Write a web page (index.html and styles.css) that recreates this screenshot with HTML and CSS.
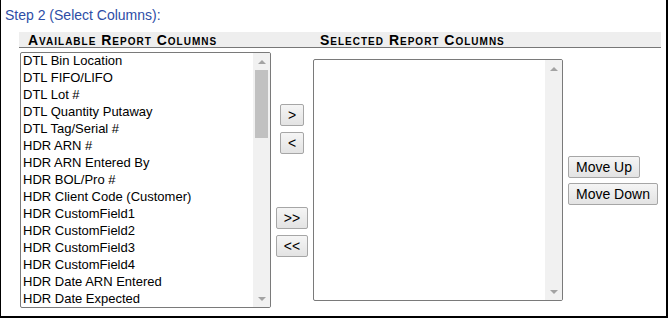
FILE: index.html
```html
<!DOCTYPE html>
<html lang="en">
<head>
  <meta charset="UTF-8">
  <meta name="viewport" content="width=device-width, initial-scale=1.0">
  <title>Report Columns</title>
  <link rel="stylesheet" href="styles.css">
</head>
<body>
  <div class="step-wrapper">
    <div class="step-title">Step 2 (Select Columns):</div>
    <div class="picker">
      <div class="picker-head">
        <div class="head-cell">Available Report Columns</div>
        <div class="head-cell head-selected">Selected Report Columns</div>
      </div>
      <div class="picker-body">
        <div class="listbox listbox-tall">
          <div class="listbox-items">
            <div class="option">DTL Bin Location</div>
            <div class="option">DTL FIFO/LIFO</div>
            <div class="option">DTL Lot #</div>
            <div class="option">DTL Quantity Putaway</div>
            <div class="option">DTL Tag/Serial #</div>
            <div class="option">HDR ARN #</div>
            <div class="option">HDR ARN Entered By</div>
            <div class="option">HDR BOL/Pro #</div>
            <div class="option">HDR Client Code (Customer)</div>
            <div class="option">HDR CustomField1</div>
            <div class="option">HDR CustomField2</div>
            <div class="option">HDR CustomField3</div>
            <div class="option">HDR CustomField4</div>
            <div class="option">HDR Date ARN Entered</div>
            <div class="option">HDR Date Expected</div>
          </div>
          <div class="scrollbar">
            <span class="sb-btn sb-up"></span>
            <span class="sb-thumb"></span>
            <span class="sb-track"></span>
            <span class="sb-btn sb-down"></span>
          </div>
        </div>

        <div class="move-col">
          <button class="btn">&gt;</button>
          <button class="btn mt-6">&lt;</button>
          <button class="btn mt-53">&gt;&gt;</button>
          <button class="btn mt-6">&lt;&lt;</button>
        </div>

        <div class="listbox listbox-short">
          <div class="listbox-items"></div>
          <div class="scrollbar">
            <span class="sb-btn sb-up"></span>
            <span class="sb-track"></span>
            <span class="sb-btn sb-down"></span>
          </div>
        </div>

        <div class="order-col">
          <button class="btn">Move Up</button>
          <button class="btn mt-5">Move Down</button>
        </div>
      </div>
    </div>
  </div>
</body>
</html>
```

FILE: styles.css
```css
*{
  margin: 0;
  padding: 0;
  box-sizing: border-box;
}

body{
  font-family: "Liberation Sans", Arial, sans-serif;
  background-color: #fff;
  color: #000;
}

.step-wrapper{
  width: 668px;
  border: solid #000;
  border-width: 0 2px 2px 1px;
  padding: 7px 5px 8px 4px;
}

.step-title{
  font-size: 14px;
  line-height: 16px;
  color: #2d4da6;
}

.picker{
  margin: 9px 0 0 14px;
}

.picker-head{
  display: grid;
  grid-template-columns: 293px 1fr;
  height: 16px;
  background-color: #eeeeee;
  border-bottom: 1px solid #777;
}

.head-cell{
  padding: 2px 0 0 9px;
  font-size: 14px;
  line-height: 13px;
  font-weight: bold;
  font-variant: small-caps;
  letter-spacing: 1px;
  white-space: nowrap;
}

.head-selected{
  padding-left: 8px;
}

.picker-body{
  display: grid;
  grid-template-columns: 251px 42px 250px 1fr;
  align-items: center;
  margin-top: 4px;
  padding-left: 1px;
}

.listbox{
  display: flex;
  border: 1px solid #7a7a7a;
  border-radius: 2px;
  background-color: #fff;
  overflow: hidden;
}

.listbox-tall{
  height: 256px;
}

.listbox-short{
  height: 242px;
}

.listbox-items{
  flex: 1;
  overflow: hidden;
  font-size: 13px;
}

.option{
  height: 17px;
  line-height: 15px;
  padding: 0 2px 2px;
  white-space: nowrap;
}

.scrollbar{
  display: flex;
  flex-direction: column;
  width: 17px;
  flex: 0 0 17px;
  background-color: #f1f1f1;
}

.sb-btn{
  display: flex;
  align-items: center;
  justify-content: center;
  height: 17px;
}

.sb-up::before,
.sb-down::before{
  content: "";
  border-left: 4px solid transparent;
  border-right: 4px solid transparent;
}

.sb-up::before{
  border-bottom: 4px solid #a3a3a3;
}

.sb-down::before{
  border-top: 4px solid #a3a3a3;
}

.sb-thumb{
  height: 68px;
  margin: 0 2px;
  background-color: #c1c1c1;
}

.sb-track{
  flex: 1;
}

.move-col{
  display: flex;
  flex-direction: column;
  align-items: center;
}

.order-col{
  display: flex;
  flex-direction: column;
  align-items: flex-start;
  padding-left: 5px;
}

.btn{
  height: 22px;
  padding: 0 7px;
  font-family: inherit;
  font-size: 14px;
  line-height: 20px;
  color: #000;
  background: linear-gradient(#f5f5f5, #e3e3e3);
  border: 1px solid #a6a6a6;
  border-radius: 2px;
  white-space: nowrap;
}

.mt-5{
  margin-top: 5px;
}

.mt-6{
  margin-top: 6px;
}

.mt-53{
  margin-top: 53px;
}
```
